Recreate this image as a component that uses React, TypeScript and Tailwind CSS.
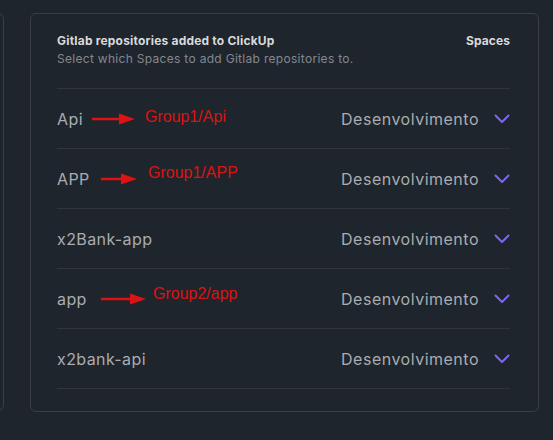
type Row = { name: string; note?: { text: string; arrowLeft: number; arrowWidth: number; textLeft: number; dy: number } }

const rows: Row[] = [
  { name: 'Api', note: { text: 'Group1/Api', arrowLeft: 35, arrowWidth: 43, textLeft: 88, dy: -2 } },
  { name: 'APP', note: { text: 'Group1/APP', arrowLeft: 44, arrowWidth: 36, textLeft: 91, dy: -6 } },
  { name: 'x2Bank-app' },
  { name: 'app', note: { text: 'Group2/app', arrowLeft: 44, arrowWidth: 45, textLeft: 96, dy: -5 } },
  { name: 'x2bank-api' },
]

function Arrow({ width }: { width: number }) {
  return (
    <svg width={width} height="12" viewBox={`0 0 ${width} 12`} className="block">
      <line x1="0" y1="6" x2={width - 14} y2="6" stroke="#dd1313" strokeWidth="2.5" />
      <polygon points={`${width - 16},0.5 ${width},6 ${width - 16},11.5`} fill="#dd1313" />
    </svg>
  )
}

function Chevron() {
  return (
    <svg width="16" height="10" viewBox="0 0 16 10" className="block">
      <polyline points="1.5,1.5 8,8 14.5,1.5" fill="none" stroke="#7b68ee" strokeWidth="2" strokeLinecap="round" strokeLinejoin="round" />
    </svg>
  )
}

export default function App() {
  return (
    <div className="flex h-[440px] w-[553px] gap-[26px] overflow-hidden bg-[#1f252c] pt-[13px] font-['Inter',sans-serif]">
      <div className="-ml-[10px] h-[398px] w-[14px] shrink-0 rounded-md border border-[#3a3f47]" />
      <div className="h-[399px] w-[509px] shrink-0 rounded-md border border-[#3a3f47] pl-[26px] pr-[28px] pt-[18px]">
        <div className="flex items-start justify-between border-b border-[#30353c] pb-[21px]">
          <div>
            <div className="text-[12px] font-bold leading-[18px] tracking-[0.2px] text-[#d8dadd]">Gitlab repositories added to ClickUp</div>
            <div className="mt-[1px] text-[12px] leading-[16px] tracking-[0.3px] text-[#838890]">Select which Spaces to add Gitlab repositories to.</div>
          </div>
          <div className="text-[12px] font-bold leading-[18px] tracking-[0.1px] text-[#d8dadd]">Spaces</div>
        </div>
        {rows.map((r) => (
          <div key={r.name} className="relative flex h-[60px] items-center justify-between border-b border-[#30353c]">
            <span className="text-[16px] tracking-[0.4px] text-[#a9acb1]">{r.name}</span>
            {r.note && (
              <div
                className="absolute top-1/2 flex items-center"
                style={{ left: r.note.arrowLeft, transform: `translateY(-50%)` }}
              >
                <Arrow width={r.note.arrowWidth} />
                <span
                  className="relative font-['Liberation_Sans',sans-serif] text-[16px] leading-none text-[#dd1313]"
                  style={{ marginLeft: r.note.textLeft - r.note.arrowLeft - r.note.arrowWidth, top: r.note.dy }}
                >
                  {r.note.text}
                </span>
              </div>
            )}
            <div className="flex items-center gap-[15px]">
              <span className="text-[16px] tracking-[0.5px] text-[#a9acb1]">Desenvolvimento</span>
              <Chevron />
            </div>
          </div>
        ))}
      </div>
    </div>
  )
}
